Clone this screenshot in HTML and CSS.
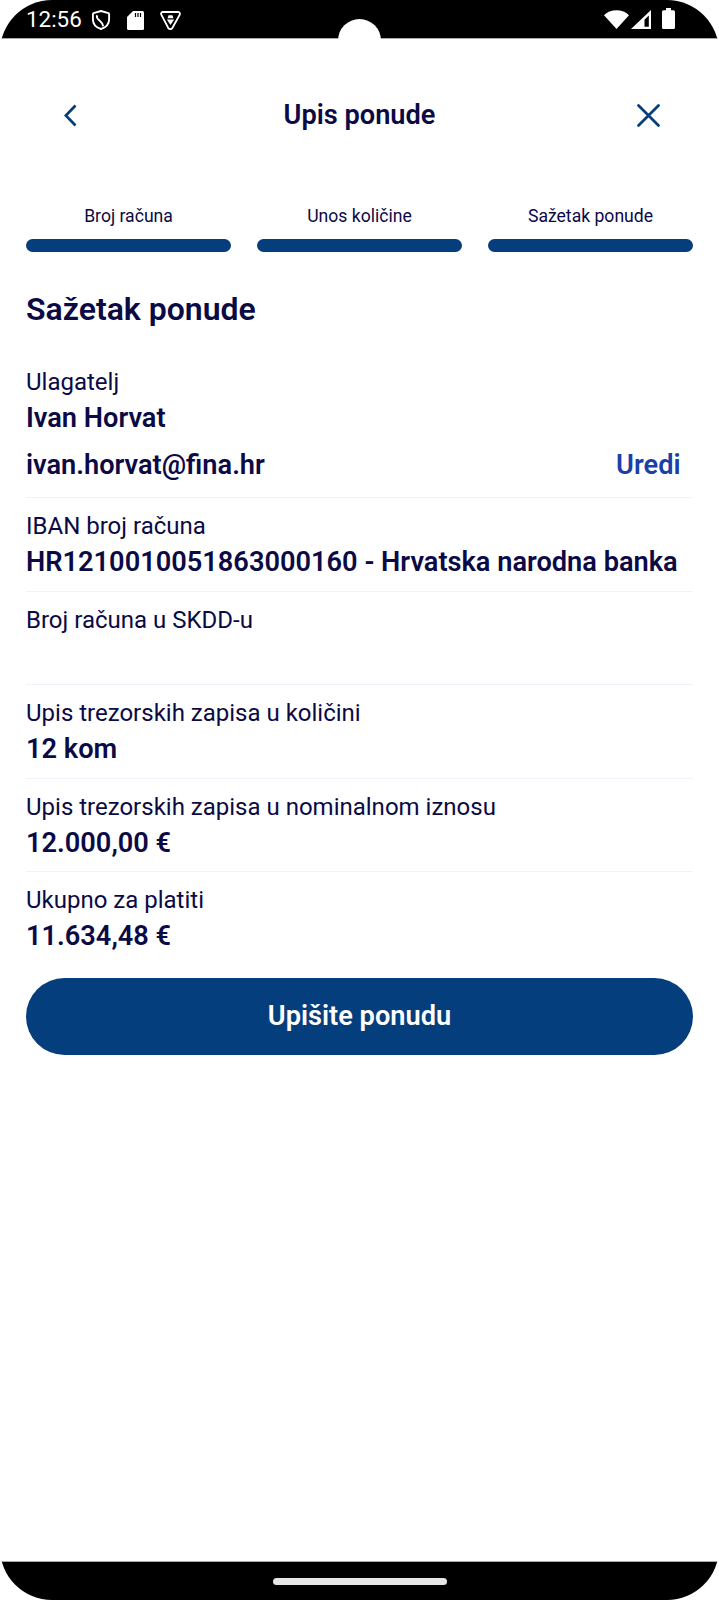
FILE: index.html
```html
<!DOCTYPE html>
<html lang="hr">
<head>
<meta charset="utf-8">
<title>Upis ponude</title>
<link rel="stylesheet" href="styles.css">
</head>
<body>
<div class="phone">
  <header class="status">
    <div class="status-left">
      <span class="clock">12:56</span>
      <svg class="si" width="20" height="20" viewBox="0 0 20 20"><path d="M10 1 2.600 3.200a1 1 0 0 0-.7 1v5.300c0 4.400 3.400 8 8.100 9.500 4.700-1.500 8.100-5.100 8.100-9.500V4.200a1 1 0 0 0-.7-1z" fill="none" stroke="#fff" stroke-width="1.900" stroke-linejoin="round"/><path d="M6 5.200c-.6 2 .3 3.500 2.500 5.300 2 1.700 3.400 3 3.700 5.800" fill="none" stroke="#fff" stroke-width="1.900"/></svg>
      <svg class="si sd" width="17" height="19" viewBox="0 0 17 19"><path d="M6 0h9.500A1.500 1.500 0 0 1 17 1.500v16a1.500 1.500 0 0 1-1.500 1.500h-14A1.500 1.500 0 0 1 0 17.500V6z" fill="#fff"/><path d="M8.500 2v4M11 2v4M13.500 2v4" stroke="#000" stroke-width="1.200"/></svg>
      <svg class="si tri" width="21" height="19" viewBox="0 0 21 19"><path d="M3 1h15c1.500 0 2.400 1.500 1.700 2.700l-7.500 13.500c-.7 1.200-3.100 1.200-3.800 0L1.300 3.700C.6 2.500 1.500 1 3 1z" fill="none" stroke="#fff" stroke-width="1.800"/><path d="M8.600 4.300h3.800l1.100 3H7.500zM6.800 8.500h7.400l-3.700 5.500z" fill="#fff"/></svg>
    </div>
    <div class="status-right">
      <svg width="25" height="19" viewBox="0 0 25 19"><path d="M0 5.200C3.200 2.200 7.600.3 12.500.3s9.300 1.900 12.500 4.900L12.500 19z" fill="#fff"/></svg>
      <svg class="signal" width="20" height="19" viewBox="0 0 20 19"><path d="M20 0v19H0z" fill="#fff"/><path d="M17.800 5.500v11.300h-4.300V9.800z" fill="#000"/></svg>
      <svg class="batt" width="13" height="21" viewBox="0 0 13 21"><path d="M4 0h5v2.200h2.500A1.500 1.500 0 0 1 13 3.700v15.800a1.500 1.500 0 0 1-1.500 1.500h-10A1.500 1.500 0 0 1 0 19.500V3.700a1.500 1.500 0 0 1 1.500-1.500H4z" fill="#fff"/></svg>
    </div>
    <span class="notch"></span>
  </header>

  <main class="screen">
    <div class="topbar">
      <svg class="back" width="13" height="23" viewBox="0 0 13 23"><path d="M11.500 1.500 1.800 11.500l9.700 10" fill="none" stroke="#043e7c" stroke-width="2.700"/></svg>
      <h1 class="title">Upis ponude</h1>
      <svg class="close" width="23" height="23" viewBox="0 0 23 23"><path d="M1.500 1.500l20 20M21.500 1.500l-20 20" fill="none" stroke="#043e7c" stroke-width="2.700" stroke-linecap="round"/></svg>
    </div>

    <div class="steps">
      <div class="step"><span class="step-label">Broj računa</span><span class="step-bar"></span></div>
      <div class="step"><span class="step-label">Unos količine</span><span class="step-bar"></span></div>
      <div class="step"><span class="step-label">Sažetak ponude</span><span class="step-bar"></span></div>
    </div>

    <h2 class="heading">Sažetak ponude</h2>

    <section class="row row-first">
      <div class="label">Ulagatelj</div>
      <div class="value">Ivan Horvat</div>
      <div class="value-line">
        <span class="value">ivan.horvat@fina.hr</span>
        <span class="edit">Uredi</span>
      </div>
    </section>
    <section class="row">
      <div class="label">IBAN broj računa</div>
      <div class="value">HR1210010051863000160 - Hrvatska narodna banka</div>
    </section>
    <section class="row">
      <div class="label">Broj računa u SKDD-u</div>
      <div class="value">&nbsp;</div>
    </section>
    <section class="row">
      <div class="label">Upis trezorskih zapisa u količini</div>
      <div class="value">12 kom</div>
    </section>
    <section class="row">
      <div class="label">Upis trezorskih zapisa u nominalnom iznosu</div>
      <div class="value">12.000,00 €</div>
    </section>
    <section class="row row-last">
      <div class="label">Ukupno za platiti</div>
      <div class="value">11.634,48 €</div>
    </section>

    <button class="cta" type="button">Upišite ponudu</button>
  </main>

  <footer class="navbar"><span class="home"></span></footer>
</div>
</body>
</html>
```

FILE: styles.css
```css
* { box-sizing: border-box; }
html, body { margin: 0; padding: 0; background: #fff; }
body { font-family: Roboto, "Noto Sans", sans-serif; color: #0b0a45; }
.phone { width: 719px; height: 1600px; display: flex; flex-direction: column; overflow: hidden; background: #fff; border-radius: 52px; }

.status { position: relative; flex: none; height: 39px; background: #000; border-bottom: 1px solid #a9a9a9; display: flex; justify-content: space-between; align-items: flex-start; padding: 9px 44px 0 26px; color: #fff; }
.status-left { display: flex; align-items: center; height: 21px; }
.status-right { display: flex; align-items: flex-start; gap: 2px; }
.clock { flex: none; width: 65px; font-size: 22.4px; line-height: 21px; font-weight: 400; }
.si { display: block; margin-top: 1px; }
.sd { margin-left: 16px; }
.tri { margin-left: 16px; }
.status-right svg { display: block; margin-top: 1px; }
.status-right .batt { margin: -1px 0 0 9px; }
.notch { position: absolute; left: 338px; top: 19px; width: 43px; height: 43px; border-radius: 50%; background: #fff; }

.screen { flex: 1; padding: 0 26px; display: flex; flex-direction: column; }
.topbar { margin-top: 52px; height: 48px; display: grid; grid-template-columns: 1fr auto 1fr; align-items: center; }
.title { margin: 0; font-size: 27.2px; font-weight: 600; line-height: 32px; }
.back { margin-left: 38px; justify-self: start; }
.close { margin-right: 33px; justify-self: end; }

.steps { display: grid; grid-template-columns: repeat(3, 1fr); gap: 26px; margin-top: 65px; }
.step { display: flex; flex-direction: column; align-items: center; gap: 11px; }
.step-label { font-size: 17.6px; line-height: 24px; }
.step-bar { width: 100%; height: 13px; border-radius: 7px; background: #043e7c; }

.heading { margin: 37px 0 0; font-size: 32px; line-height: 40px; font-weight: 600; }

.row { border-bottom: 1px solid #f0f3fa; padding: 12px 0 8.5px; }
.row-first { padding-top: 37px; padding-bottom: 12px; }
.row-last { border-bottom: 0; }
.label { font-size: 24px; line-height: 32px; }
.value { font-size: 27.2px; line-height: 40px; font-weight: 600; }
.value-line { display: flex; justify-content: space-between; margin-top: 7px; padding-right: 12.5px; }
.edit { font-size: 27.2px; line-height: 40px; font-weight: 600; color: #1b3fa9; }

.cta { margin-top: 13px; height: 77px; width: 100%; border: 0; border-radius: 38.5px; background: #043e7c; color: #fff; font-family: inherit; font-size: 27.2px; font-weight: 600; }

.navbar { flex: none; height: 39px; background: #000; border-top: 1px solid #a9a9a9; display: flex; justify-content: center; padding-top: 16px; }
.home { width: 174px; height: 7px; border-radius: 4px; background: #e6e6e6; }
```
